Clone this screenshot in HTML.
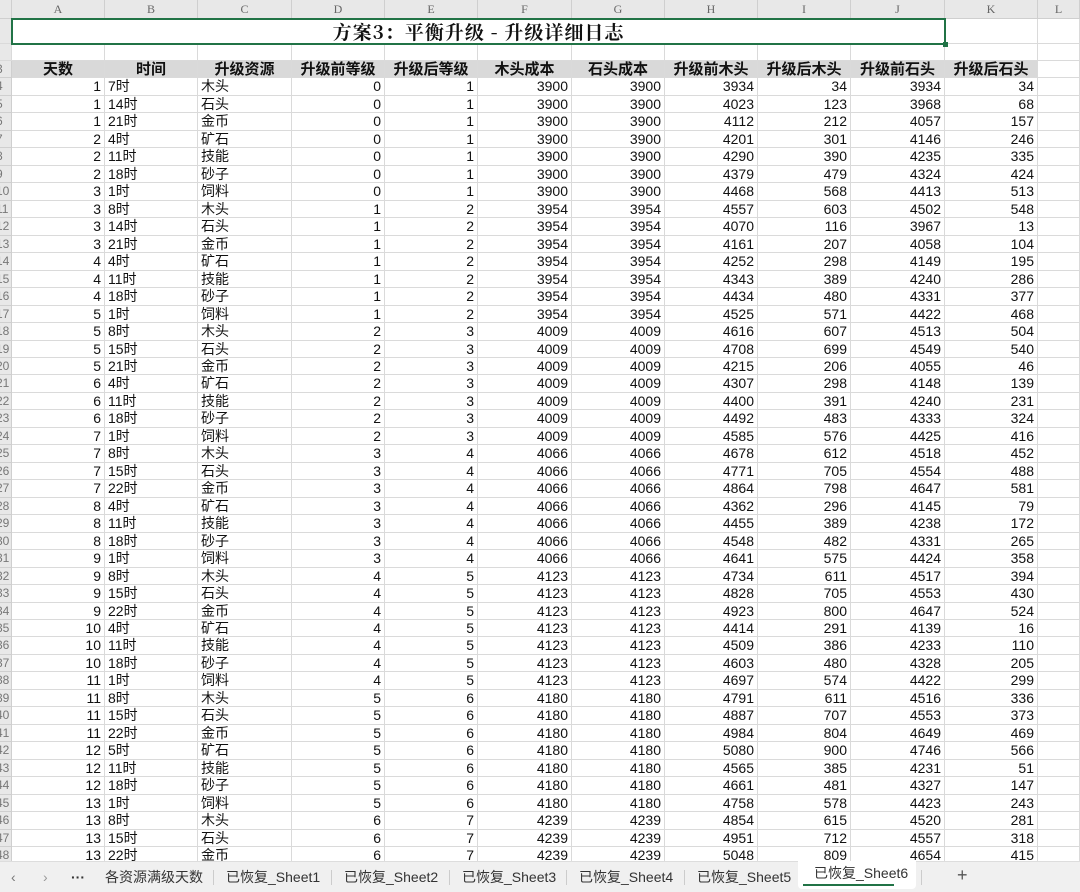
<!DOCTYPE html>
<html><head><meta charset="utf-8">
<style>
*{margin:0;padding:0;box-sizing:border-box}
body{width:1080px;height:892px;overflow:hidden;background:#fff;font-family:"Liberation Sans","Noto Sans CJK SC",sans-serif;position:relative;color:#111}
.colh{position:absolute;left:0;top:0;width:1080px;height:19px;background:#e8e8e8;border-bottom:1px solid #cfcfcf;display:grid;grid-template-columns:12px 93px 93px 94px 93px 93px 94px 93px 93px 93px 94px 93px 42px}
.colh span{border-right:1px solid #cfcfcf;text-align:center;font:12px "Liberation Serif",serif;color:#666;line-height:19px}
.r1,.r2{position:absolute;left:0;width:1080px;display:grid;grid-template-columns:12px 93px 93px 94px 93px 93px 94px 93px 93px 93px 94px 93px 42px}
.r1 span,.r2 span{border-right:1px solid #dadada;border-bottom:1px solid #dadada}
.r1 span:first-child,.r2 span:first-child{background:#e8e8e8}
.r1{top:19px;height:25px}
.r2{top:44px;height:17px}
.title{position:absolute;left:11px;top:18px;width:935px;height:27px;border:2px solid #217346;text-align:center;font:bold 19px "Noto Serif CJK SC",serif;line-height:23px;background:#fff;letter-spacing:1px}
.title:after{content:"";position:absolute;right:-4px;bottom:-4px;width:5px;height:5px;background:#217346}
.g{position:absolute;left:0;top:61px;width:1080px;display:grid;grid-template-columns:12px 93px 93px 94px 93px 93px 94px 93px 93px 93px 94px 93px 42px;grid-auto-rows:17.48px;font-size:14px}
.g i{font-style:normal;border-right:1px solid #dadada;border-bottom:1px solid #dadada;line-height:17px;white-space:nowrap;overflow:hidden;text-align:right;padding-right:3px}
.g i:nth-child(13n+1){font-size:12px;color:#777;background:#e8e8e8;padding-right:0;border-color:#cfcfcf;text-indent:-4px;text-align:left}
.g i:nth-child(13n+3),.g i:nth-child(13n+4){text-align:left;padding-left:3px}
.g i:nth-child(13n){padding:0}
.g .h{font-weight:bold;text-align:center!important;background:#d9d9d9;padding:0!important;font-size:15px}
.tabs{position:absolute;left:0;top:861px;width:1080px;height:31px;background:#f0f0f0;border-top:1px solid #ddd;font-size:14px;color:#333}
.tabs span{position:absolute;top:6px;line-height:18px;white-space:nowrap}
.sep{position:absolute;top:8px;width:1px;height:15px;background:#ccc}
.act{position:absolute;left:798px;top:-1px;width:118px;height:28px;background:#fff;border-radius:0 0 4px 4px}
</style></head><body>
<div class="colh"><span></span><span>A</span><span>B</span><span>C</span><span>D</span><span>E</span><span>F</span><span>G</span><span>H</span><span>I</span><span>J</span><span>K</span><span>L</span></div>
<div class="r1"><span></span><span></span><span></span><span></span><span></span><span></span><span></span><span></span><span></span><span></span><span></span><span></span><span></span></div>
<div class="r2"><span></span><span></span><span></span><span></span><span></span><span></span><span></span><span></span><span></span><span></span><span></span><span></span><span></span></div>
<div class="title">方案3：平衡升级 - 升级详细日志</div>
<div class="g">
<i>3</i><i class="h">天数</i><i class="h">时间</i><i class="h">升级资源</i><i class="h">升级前等级</i><i class="h">升级后等级</i><i class="h">木头成本</i><i class="h">石头成本</i><i class="h">升级前木头</i><i class="h">升级后木头</i><i class="h">升级前石头</i><i class="h">升级后石头</i><i></i>
<i>4</i><i>1</i><i>7时</i><i>木头</i><i>0</i><i>1</i><i>3900</i><i>3900</i><i>3934</i><i>34</i><i>3934</i><i>34</i><i></i>
<i>5</i><i>1</i><i>14时</i><i>石头</i><i>0</i><i>1</i><i>3900</i><i>3900</i><i>4023</i><i>123</i><i>3968</i><i>68</i><i></i>
<i>6</i><i>1</i><i>21时</i><i>金币</i><i>0</i><i>1</i><i>3900</i><i>3900</i><i>4112</i><i>212</i><i>4057</i><i>157</i><i></i>
<i>7</i><i>2</i><i>4时</i><i>矿石</i><i>0</i><i>1</i><i>3900</i><i>3900</i><i>4201</i><i>301</i><i>4146</i><i>246</i><i></i>
<i>8</i><i>2</i><i>11时</i><i>技能</i><i>0</i><i>1</i><i>3900</i><i>3900</i><i>4290</i><i>390</i><i>4235</i><i>335</i><i></i>
<i>9</i><i>2</i><i>18时</i><i>砂子</i><i>0</i><i>1</i><i>3900</i><i>3900</i><i>4379</i><i>479</i><i>4324</i><i>424</i><i></i>
<i>10</i><i>3</i><i>1时</i><i>饲料</i><i>0</i><i>1</i><i>3900</i><i>3900</i><i>4468</i><i>568</i><i>4413</i><i>513</i><i></i>
<i>11</i><i>3</i><i>8时</i><i>木头</i><i>1</i><i>2</i><i>3954</i><i>3954</i><i>4557</i><i>603</i><i>4502</i><i>548</i><i></i>
<i>12</i><i>3</i><i>14时</i><i>石头</i><i>1</i><i>2</i><i>3954</i><i>3954</i><i>4070</i><i>116</i><i>3967</i><i>13</i><i></i>
<i>13</i><i>3</i><i>21时</i><i>金币</i><i>1</i><i>2</i><i>3954</i><i>3954</i><i>4161</i><i>207</i><i>4058</i><i>104</i><i></i>
<i>14</i><i>4</i><i>4时</i><i>矿石</i><i>1</i><i>2</i><i>3954</i><i>3954</i><i>4252</i><i>298</i><i>4149</i><i>195</i><i></i>
<i>15</i><i>4</i><i>11时</i><i>技能</i><i>1</i><i>2</i><i>3954</i><i>3954</i><i>4343</i><i>389</i><i>4240</i><i>286</i><i></i>
<i>16</i><i>4</i><i>18时</i><i>砂子</i><i>1</i><i>2</i><i>3954</i><i>3954</i><i>4434</i><i>480</i><i>4331</i><i>377</i><i></i>
<i>17</i><i>5</i><i>1时</i><i>饲料</i><i>1</i><i>2</i><i>3954</i><i>3954</i><i>4525</i><i>571</i><i>4422</i><i>468</i><i></i>
<i>18</i><i>5</i><i>8时</i><i>木头</i><i>2</i><i>3</i><i>4009</i><i>4009</i><i>4616</i><i>607</i><i>4513</i><i>504</i><i></i>
<i>19</i><i>5</i><i>15时</i><i>石头</i><i>2</i><i>3</i><i>4009</i><i>4009</i><i>4708</i><i>699</i><i>4549</i><i>540</i><i></i>
<i>20</i><i>5</i><i>21时</i><i>金币</i><i>2</i><i>3</i><i>4009</i><i>4009</i><i>4215</i><i>206</i><i>4055</i><i>46</i><i></i>
<i>21</i><i>6</i><i>4时</i><i>矿石</i><i>2</i><i>3</i><i>4009</i><i>4009</i><i>4307</i><i>298</i><i>4148</i><i>139</i><i></i>
<i>22</i><i>6</i><i>11时</i><i>技能</i><i>2</i><i>3</i><i>4009</i><i>4009</i><i>4400</i><i>391</i><i>4240</i><i>231</i><i></i>
<i>23</i><i>6</i><i>18时</i><i>砂子</i><i>2</i><i>3</i><i>4009</i><i>4009</i><i>4492</i><i>483</i><i>4333</i><i>324</i><i></i>
<i>24</i><i>7</i><i>1时</i><i>饲料</i><i>2</i><i>3</i><i>4009</i><i>4009</i><i>4585</i><i>576</i><i>4425</i><i>416</i><i></i>
<i>25</i><i>7</i><i>8时</i><i>木头</i><i>3</i><i>4</i><i>4066</i><i>4066</i><i>4678</i><i>612</i><i>4518</i><i>452</i><i></i>
<i>26</i><i>7</i><i>15时</i><i>石头</i><i>3</i><i>4</i><i>4066</i><i>4066</i><i>4771</i><i>705</i><i>4554</i><i>488</i><i></i>
<i>27</i><i>7</i><i>22时</i><i>金币</i><i>3</i><i>4</i><i>4066</i><i>4066</i><i>4864</i><i>798</i><i>4647</i><i>581</i><i></i>
<i>28</i><i>8</i><i>4时</i><i>矿石</i><i>3</i><i>4</i><i>4066</i><i>4066</i><i>4362</i><i>296</i><i>4145</i><i>79</i><i></i>
<i>29</i><i>8</i><i>11时</i><i>技能</i><i>3</i><i>4</i><i>4066</i><i>4066</i><i>4455</i><i>389</i><i>4238</i><i>172</i><i></i>
<i>30</i><i>8</i><i>18时</i><i>砂子</i><i>3</i><i>4</i><i>4066</i><i>4066</i><i>4548</i><i>482</i><i>4331</i><i>265</i><i></i>
<i>31</i><i>9</i><i>1时</i><i>饲料</i><i>3</i><i>4</i><i>4066</i><i>4066</i><i>4641</i><i>575</i><i>4424</i><i>358</i><i></i>
<i>32</i><i>9</i><i>8时</i><i>木头</i><i>4</i><i>5</i><i>4123</i><i>4123</i><i>4734</i><i>611</i><i>4517</i><i>394</i><i></i>
<i>33</i><i>9</i><i>15时</i><i>石头</i><i>4</i><i>5</i><i>4123</i><i>4123</i><i>4828</i><i>705</i><i>4553</i><i>430</i><i></i>
<i>34</i><i>9</i><i>22时</i><i>金币</i><i>4</i><i>5</i><i>4123</i><i>4123</i><i>4923</i><i>800</i><i>4647</i><i>524</i><i></i>
<i>35</i><i>10</i><i>4时</i><i>矿石</i><i>4</i><i>5</i><i>4123</i><i>4123</i><i>4414</i><i>291</i><i>4139</i><i>16</i><i></i>
<i>36</i><i>10</i><i>11时</i><i>技能</i><i>4</i><i>5</i><i>4123</i><i>4123</i><i>4509</i><i>386</i><i>4233</i><i>110</i><i></i>
<i>37</i><i>10</i><i>18时</i><i>砂子</i><i>4</i><i>5</i><i>4123</i><i>4123</i><i>4603</i><i>480</i><i>4328</i><i>205</i><i></i>
<i>38</i><i>11</i><i>1时</i><i>饲料</i><i>4</i><i>5</i><i>4123</i><i>4123</i><i>4697</i><i>574</i><i>4422</i><i>299</i><i></i>
<i>39</i><i>11</i><i>8时</i><i>木头</i><i>5</i><i>6</i><i>4180</i><i>4180</i><i>4791</i><i>611</i><i>4516</i><i>336</i><i></i>
<i>40</i><i>11</i><i>15时</i><i>石头</i><i>5</i><i>6</i><i>4180</i><i>4180</i><i>4887</i><i>707</i><i>4553</i><i>373</i><i></i>
<i>41</i><i>11</i><i>22时</i><i>金币</i><i>5</i><i>6</i><i>4180</i><i>4180</i><i>4984</i><i>804</i><i>4649</i><i>469</i><i></i>
<i>42</i><i>12</i><i>5时</i><i>矿石</i><i>5</i><i>6</i><i>4180</i><i>4180</i><i>5080</i><i>900</i><i>4746</i><i>566</i><i></i>
<i>43</i><i>12</i><i>11时</i><i>技能</i><i>5</i><i>6</i><i>4180</i><i>4180</i><i>4565</i><i>385</i><i>4231</i><i>51</i><i></i>
<i>44</i><i>12</i><i>18时</i><i>砂子</i><i>5</i><i>6</i><i>4180</i><i>4180</i><i>4661</i><i>481</i><i>4327</i><i>147</i><i></i>
<i>45</i><i>13</i><i>1时</i><i>饲料</i><i>5</i><i>6</i><i>4180</i><i>4180</i><i>4758</i><i>578</i><i>4423</i><i>243</i><i></i>
<i>46</i><i>13</i><i>8时</i><i>木头</i><i>6</i><i>7</i><i>4239</i><i>4239</i><i>4854</i><i>615</i><i>4520</i><i>281</i><i></i>
<i>47</i><i>13</i><i>15时</i><i>石头</i><i>6</i><i>7</i><i>4239</i><i>4239</i><i>4951</i><i>712</i><i>4557</i><i>318</i><i></i>
<i>48</i><i>13</i><i>22时</i><i>金币</i><i>6</i><i>7</i><i>4239</i><i>4239</i><i>5048</i><i>809</i><i>4654</i><i>415</i><i></i>
</div>
<div class="tabs">
<div class="act"></div>
<span style="left:11px;color:#777">&lsaquo;</span>
<span style="left:43px;color:#999">&rsaquo;</span>
<span style="left:71px;font-weight:bold">···</span>
<span style="left:105px">各资源满级天数</span>
<div class="sep" style="left:213px"></div>
<span style="left:226px">已恢复_Sheet1</span>
<div class="sep" style="left:331px"></div>
<span style="left:344px">已恢复_Sheet2</span>
<div class="sep" style="left:449px"></div>
<span style="left:462px">已恢复_Sheet3</span>
<div class="sep" style="left:566px"></div>
<span style="left:579px">已恢复_Sheet4</span>
<div class="sep" style="left:684px"></div>
<span style="left:697px">已恢复_Sheet5</span>
<span style="left:814px;top:2px">已恢复_Sheet6</span>
<div style="position:absolute;left:803px;top:22px;width:91px;height:2px;background:#217346"></div>
<div class="sep" style="left:921px"></div>
<span style="left:957px;font-size:18px;top:4px;color:#555">+</span>
</div>
</body></html>
